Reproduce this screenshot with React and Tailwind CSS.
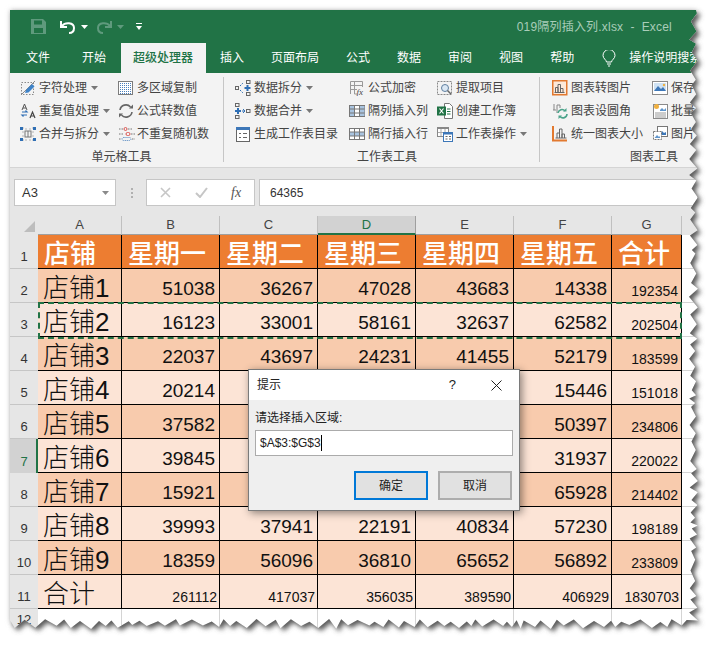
import React from 'react';

const Svg = ({ children, w = 16 }) => (
  <svg width={w} height={16} viewBox={`0 0 ${w} 16`} fill="none" className="shrink-0">
    {children}
  </svg>
);

const BLUE = '#2f6fb5';
const ORANGE = '#e2792f';

const Icons = {
  pen: (
    <Svg>
      <rect x="1.5" y="2.5" width="12" height="12" stroke="#8a8a8a" strokeDasharray="1.5 1.5" />
      <path d="M1 15 15 1" stroke="#8a8a8a" />
      <path d="M5 13l1-3 6-6 2.5 2.5-6 6z" fill="#3f83c8" />
    </Svg>
  ),
  repeat: (
    <Svg>
      <path d="M2 7l2.5-6L7 7M3 5h3" stroke="#555" />
      <path d="M10 15l2.5-6 2.5 6M11 13h3" stroke="#444" strokeWidth="1.2" />
      <path d="M2 9h5l-1.5-1.5M7 12H2l1.5 1.5" stroke={BLUE} strokeWidth="1.2" />
    </Svg>
  ),
  merge: (
    <Svg>
      <path d="M1 3h14M1 14h14M3 1v14M13 1v14" stroke="#b5b5b5" strokeDasharray="2 2" />
      <rect x="5" y="5" width="6" height="6" stroke="#777" />
      <path d="M8 5v6" stroke="#777" />
      <rect x="0" y="1" width="3" height="3" fill={BLUE} />
      <rect x="13" y="1" width="3" height="3" fill={BLUE} />
      <rect x="0" y="12" width="3" height="3" fill={BLUE} />
      <rect x="13" y="12" width="3" height="3" fill={BLUE} />
    </Svg>
  ),
  dots: (
    <Svg>
      <rect x="0.5" y="1.5" width="14" height="13" stroke="#7c7c7c" fill="#fff" />
      <path d="M2 3.5h11M2 5.5h11M2 7.5h11M2 9.5h11M2 11.5h11M2 13.5h11" stroke="#4a80bd" strokeDasharray="1 1" />
    </Svg>
  ),
  cycle: (
    <Svg>
      <path d="M2 7a6 6 0 0 1 10.5-3M14 9a6 6 0 0 1-10.5 3" stroke="#666" strokeWidth="1.6" />
      <path d="M11 5.5h4V1.5zM5 10.5H1v4z" fill="#666" />
    </Svg>
  ),
  random: (
    <Svg w={18}>
      <path d="M1 3h4M10 3h4M1 8h4M13 8h4M1 13h2M14 13h3" stroke="#777" strokeDasharray="1.5 1" />
      <rect x="6" y="1.5" width="3" height="3" rx="1.5" stroke="#d9534f" />
      <rect x="8" y="6.5" width="4" height="3" rx="1.5" stroke="#d9534f" />
      <rect x="4" y="11.5" width="9" height="3" rx="1.5" stroke="#4a80bd" strokeDasharray="1 1" />
    </Svg>
  ),
  split: (
    <Svg>
      <rect x="0.5" y="6.5" width="3" height="3" stroke="#666" />
      <rect x="11.5" y="0.5" width="3.5" height="3" stroke="#666" />
      <rect x="11.5" y="12.5" width="3.5" height="3" stroke="#666" />
      <path d="M12.5 5v6M9.5 8h6" stroke={BLUE} strokeWidth="2" />
      <path d="M5 6l3-3M5 10l3 3" stroke={BLUE} strokeDasharray="1.5 1" />
    </Svg>
  ),
  combine: (
    <Svg>
      <rect x="0.5" y="0.5" width="3.5" height="3" stroke="#666" />
      <rect x="0.5" y="12.5" width="3.5" height="3" stroke="#666" />
      <rect x="11.5" y="6.5" width="3.5" height="3" stroke="#666" />
      <path d="M3 5v6M0 8h6" stroke={BLUE} strokeWidth="2" />
      <path d="M7 8h3M8 6l2 2-2 2" stroke={BLUE} />
    </Svg>
  ),
  toc: (
    <Svg>
      <rect x="1.5" y="1.5" width="13" height="14" stroke="#666" fill="#fff" />
      <rect x="1" y="1" width="14" height="3" fill="#3d77b8" />
      <path d="M4 7.5h2M8 7.5h4M4 11.5h2M8 11.5h4" stroke="#666" />
    </Svg>
  ),
  fx: (
    <Svg>
      <path d="M1.500 14V1.500h12V7M1.500 5.500h12M1.500 9.500H8M5.500 1.500V14H8" stroke="#999" />
      <text x="7.500" y="15" fontSize="9" fontStyle="italic" fontFamily="Liberation Serif" fill="#444">fx</text>
    </Svg>
  ),
  cols: (
    <Svg>
      <rect x="0.5" y="2.5" width="15" height="11" fill="#fff" stroke="#777" />
      <rect x="1" y="3" width="4.5" height="10" fill="#a9c4e0" />
      <rect x="10.5" y="3" width="5" height="10" fill="#a9c4e0" />
      <path d="M0.500 6h15M0.500 10h15M5.500 2.500v11M10.500 2.500v11" stroke="#777" />
    </Svg>
  ),
  rows: (
    <Svg>
      <rect x="0.5" y="2.5" width="15" height="11" fill="#fff" stroke="#777" />
      <rect x="1" y="6" width="14" height="4" fill="#a9c4e0" />
      <path d="M0.500 6h15M0.500 10h15M5.500 2.500v11M10.500 2.500v11" stroke="#777" />
    </Svg>
  ),
  extract: (
    <Svg>
      <rect x="0.5" y="1.5" width="14" height="13" stroke="#888" strokeDasharray="2 1" />
      <circle cx="8" cy="8" r="3.5" fill="#dbe8f4" stroke="#5f7f9f" />
      <path d="M10.500 10.500 14 14" stroke="#666" strokeWidth="1.5" />
    </Svg>
  ),
  book: (
    <Svg>
      <path d="M7.500 0.500h5l3 3v12h-8z" fill="#fff" stroke="#777" />
      <path d="M10 6h3.500M10 8.500h3.500M10 11h3.500" stroke="#217346" />
      <rect x="0" y="3.5" width="9" height="9" fill="#217346" />
      <path d="M2.500 5.500l4 5M6.500 5.500l-4 5" stroke="#fff" strokeWidth="1.2" />
    </Svg>
  ),
  sheet: (
    <Svg>
      <rect x="0.5" y="1.5" width="11" height="9" fill="#fff" stroke="#888" />
      <rect x="1" y="1" width="11" height="2" fill="#888" />
      <path d="M4 3v7M8 3v4M1 6.500h10" stroke="#aaa" />
      <rect x="6.5" y="6.5" width="9" height="9" fill="#fff" stroke="#3d77b8" />
      <rect x="6" y="6" width="10" height="2.5" fill="#3d77b8" />
      <path d="M8.500 10.500h2M12 10.500h2M8.500 13h2M12 13h2" stroke="#666" />
    </Svg>
  ),
  chartPic: (
    <Svg>
      <rect x="0.75" y="0.75" width="14" height="14" fill="#fde9d9" stroke={ORANGE} strokeWidth="1.5" />
      <path d="M3.500 12.500v-5h2.500v5M6 12.500v-8h2.500v8M8.500 12.500v-4h2.500v4M2.500 12.500h10" stroke="#666" />
    </Svg>
  ),
  chartRound: (
    <Svg>
      <path d="M2 1v6M1 7h3M5 10V2h3v3" stroke="#888" />
      <path d="M6 10a4 4 0 0 1 7-2M15 11a4 4 0 0 1-7 2.500" stroke="#4aa38a" strokeWidth="1.6" />
      <path d="M11 8.500h3.500V5zM10 12.500H6.500V16z" fill="#4aa38a" />
    </Svg>
  ),
  chartSize: (
    <Svg>
      <rect x="0" y="0" width="2" height="14" fill={ORANGE} />
      <rect x="0" y="13.5" width="15" height="2" fill={ORANGE} />
      <path d="M5 12V7h2.500v5M7.500 12V3H10v9M10 12V8h2.500v4M3.500 12h11" stroke="#666" />
    </Svg>
  ),
  picture: (
    <Svg>
      <rect x="0.5" y="1.5" width="15" height="13" fill="#fff" stroke="#8a8a8a" />
      <rect x="2" y="3" width="12" height="8" fill="#cfe2f3" />
      <path d="M2 11l4-5 3 3 2-2 3 4z" fill="#3d77b8" />
      <circle cx="12" cy="5" r="1.2" fill="#f0b040" />
    </Svg>
  ),
  batch: (
    <Svg>
      <rect x="1.5" y="1.5" width="14" height="14" fill="#fff" stroke="#8a8a8a" />
      <circle cx="4.5" cy="3.5" r="2.5" fill="#f0b040" />
      <path d="M8 7l2-2 2 2 2-2v3H8z" fill="#5f95cc" />
      <path d="M3 10h11M3 12h11M3 14h11" stroke="#999" />
    </Svg>
  ),
  pics: (
    <Svg>
      <rect x="5.5" y="0.5" width="10" height="10" fill="#fff" stroke="#777" />
      <path d="M7 9l3-4 2 2 2-1v3z" fill="#3d77b8" />
      <rect x="1.5" y="5.5" width="8" height="8" fill="#fff" stroke="#777" strokeDasharray="2 1" />
      <path d="M2.500 12l2.500-3 2 2 1-1v2z" fill="#5f95cc" />
    </Svg>
  ),
};

const Caret = ({ color = '#777', className = 'ml-[5px]' }) => (
  <svg width="7" height="4" viewBox="0 0 7 4" className={`shrink-0 ${className}`}>
    <path d="M0 0h7L3.500 4z" fill={color} />
  </svg>
);

const Item = ({ icon, label, caret }) => (
  <div className="flex items-center h-[23px] gap-[3px] text-[12px] leading-[16px] text-[#444] whitespace-nowrap">
    <span className="w-4 h-4 flex shrink-0">{icon}</span>
    <span>{label}</span>
    {caret && <Caret className="ml-[1px]" />}
  </div>
);

const Group = ({ label, className, children }) => (
  <div className={`flex flex-col shrink-0 ${className}`}>
    <div className="flex h-[71px]">{children}</div>
    <div className="h-[19px] flex items-center justify-center text-[12px] text-[#444]">{label}</div>
  </div>
);

const Ribbon = () => (
  <div className="flex h-[95px] pt-[3px] bg-[#f3f3f3] border-b border-[#d4d4d4] overflow-hidden">
    <Group label="单元格工具" className="w-[213px] pl-[10px]">
      <div className="w-[98px]">
        <Item icon={Icons.pen} label="字符处理" caret />
        <Item icon={Icons.repeat} label="重复值处理" caret />
        <Item icon={Icons.merge} label="合并与拆分" caret />
      </div>
      <div>
        <Item icon={Icons.dots} label="多区域复制" />
        <Item icon={Icons.cycle} label="公式转数值" />
        <Item icon={Icons.random} label="不重复随机数" />
      </div>
    </Group>
    <div className="w-px h-[85px] mt-[1px] bg-[#c6c6c6] shrink-0" />
    <Group label="工作表工具" className="w-[315px] pl-[11px]">
      <div className="w-[114px]">
        <Item icon={Icons.split} label="数据拆分" caret />
        <Item icon={Icons.combine} label="数据合并" caret />
        <Item icon={Icons.toc} label="生成工作表目录" />
      </div>
      <div className="w-[88px]">
        <Item icon={Icons.fx} label="公式加密" />
        <Item icon={Icons.cols} label="隔列插入列" />
        <Item icon={Icons.rows} label="隔行插入行" />
      </div>
      <div>
        <Item icon={Icons.extract} label="提取项目" />
        <Item icon={Icons.book} label="创建工作簿" />
        <Item icon={Icons.sheet} label="工作表操作" caret />
      </div>
    </Group>
    <div className="w-px h-[85px] mt-[1px] bg-[#c6c6c6] shrink-0" />
    <Group label="图表工具" className="w-[216px] pl-[12px]">
      <div className="w-[100px]">
        <Item icon={Icons.chartPic} label="图表转图片" />
        <Item icon={Icons.chartRound} label="图表设圆角" />
        <Item icon={Icons.chartSize} label="统一图表大小" />
      </div>
      <div>
        <Item icon={Icons.picture} label="保存" />
        <Item icon={Icons.batch} label="批量" />
        <Item icon={Icons.pics} label="图片" />
      </div>
    </Group>
  </div>
);

const TitleBar = () => (
  <div className="flex items-center h-[33px] bg-[#217346]">
    <svg width="15" height="15" viewBox="0 0 15 15" className="ml-[21px] shrink-0">
      <path d="M0 0h12l3 3v12H0z" fill="#5f9a7d" />
      <rect x="3" y="1.5" width="8" height="4" fill="#217346" />
      <rect x="3" y="9" width="9" height="5" fill="#217346" />
    </svg>
    <svg width="16" height="14" viewBox="0 0 16 14" fill="none" className="ml-[14px] shrink-0">
      <path d="M2 6c3-4 12-4 12 2 0 3-2 5-5 5" stroke="#fff" strokeWidth="2" />
      <path d="M1 1v6h6" stroke="#fff" strokeWidth="2" />
    </svg>
    <Caret color="#fff" />
    <svg width="16" height="14" viewBox="0 0 16 14" fill="none" className="ml-[8px] shrink-0">
      <path d="M14 6C11 2 2 2 2 8c0 3 2 5 5 5" stroke="#5f9a7d" strokeWidth="2" />
      <path d="M15 1v6H9" stroke="#5f9a7d" strokeWidth="2" />
    </svg>
    <Caret color="#5f9a7d" />
    <svg width="6" height="7" viewBox="0 0 6 7" className="ml-[12px] shrink-0">
      <path d="M0 0h6v1H0zM0 3h6L3 7z" fill="#fff" />
    </svg>
    <div className="ml-auto mr-[30px] text-[12px] tracking-[0.2px] text-[#a9cdb9] whitespace-pre">019隔列插入列.xlsx  -  Excel</div>
  </div>
);

const Tabs = () => (
  <div className="flex h-[30px] bg-[#217346] text-[12px] text-white whitespace-nowrap">
    <div className="ml-[16px] flex items-center">文件</div>
    <div className="ml-[32px] flex items-center">开始</div>
    <div className="ml-[15px] px-3 flex items-center bg-[#f3f3f3] text-[#217346] font-medium w-[85px]">超级处理器</div>
    <div className="ml-[14px] flex items-center gap-[27px]">
      <span>插入</span>
      <span>页面布局</span>
      <span>公式</span>
      <span>数据</span>
      <span>审阅</span>
      <span>视图</span>
      <span>帮助</span>
    </div>
    <div className="ml-[28px] flex items-center">
      <svg width="14" height="17" viewBox="0 0 14 17" fill="none" className="shrink-0">
        <path d="M4.500 12c0-2-3.500-3.500-3.500-6.500a6 6 0 0 1 12 0c0 3-3.500 4.500-3.500 6.500zM5 14h4M6 16h2" stroke="#fff" />
      </svg>
      <span className="ml-[13px]">操作说明搜索</span>
    </div>
  </div>
);

const FormulaBar = () => (
  <div className="flex items-center h-[48px] pt-[1px] px-1 gap-[4px] bg-[#e6e6e6]">
    <div className="w-[102px] h-[27px] flex items-center justify-between pl-[7px] pr-[6px] bg-white border border-[#c6c6c6] text-[13px] text-[#333]">
      <span>A3</span>
      <Caret color="#8a8a8a" />
    </div>
    <div className="w-[4px] ml-[10px] mr-[8px] flex flex-col gap-[2px] items-center">
      <span className="w-[2px] h-[2px] bg-[#b0b0b0]" />
      <span className="w-[2px] h-[2px] bg-[#b0b0b0]" />
      <span className="w-[2px] h-[2px] bg-[#b0b0b0]" />
    </div>
    <div className="w-[109px] h-[27px] flex items-center bg-white border border-[#c6c6c6]">
      <svg width="11" height="11" viewBox="0 0 11 11" fill="none" className="ml-[13px] shrink-0">
        <path d="M1 1l9 9M10 1l-9 9" stroke="#c6c6c6" strokeWidth="1.6" />
      </svg>
      <svg width="13" height="11" viewBox="0 0 13 11" fill="none" className="ml-[24px] shrink-0">
        <path d="M1 6l4 4 7-9" stroke="#c6c6c6" strokeWidth="2" />
      </svg>
      <span className="ml-[23px] font-['Liberation_Serif',serif] italic text-[14px] leading-none text-[#555]">fx</span>
    </div>
    <div className="flex-1 h-[27px] flex items-center pl-[10px] bg-white border border-[#c6c6c6] text-[12px] text-[#333]">64365</div>
  </div>
);

const COLUMNS = ['A', 'B', 'C', 'D', 'E', 'F', 'G'];

const rows = [
  ['店铺', '星期一', '星期二', '星期三', '星期四', '星期五', '合计'],
  ['店铺1', '51038', '36267', '47028', '43683', '14338', '192354'],
  ['店铺2', '16123', '33001', '58161', '32637', '62582', '202504'],
  ['店铺3', '22037', '43697', '24231', '41455', '52179', '183599'],
  ['店铺4', '20214', '', '', '', '15446', '151018'],
  ['店铺5', '37582', '', '', '', '50397', '234806'],
  ['店铺6', '39845', '', '', '', '31937', '220022'],
  ['店铺7', '15921', '', '', '', '65928', '214402'],
  ['店铺8', '39993', '37941', '22191', '40834', '57230', '198189'],
  ['店铺9', '18359', '56096', '36810', '65652', '56892', '233809'],
  ['合计', '261112', '417037', '356035', '389590', '406929', '1830703'],
];

const rowBg = (i) => {
  if (i === 0) return 'bg-[#ed7d31]';
  return i % 2 === 1 ? 'bg-[#f8cbad]' : 'bg-[#fce4d6]';
};

const Cell = ({ value, row, col }) => {
  let text = 'justify-end pr-[4px] text-[19px] leading-[26px]';
  if (row === 0) text = 'pl-[6px] text-[26px] leading-[28px] font-medium text-white';
  else if (col === 0) text = 'pl-[5px] text-[26px] leading-[28px] font-light';
  else if (row === 10) text = 'justify-end pr-[2px] text-[14px] leading-[22px]';
  else if (col === 6) text = 'justify-end pr-[3px] text-[14px] leading-[22px]';
  return (
    <div className={`h-[34px] flex items-end border-r border-b border-black text-[#111] whitespace-nowrap ${rowBg(row)} ${text}`}>
      {value}
    </div>
  );
};

const Sheet = () => (
  <div className="relative bg-white">
    <div className="grid grid-cols-[28px_84px_repeat(5,98px)_70px_1fr]">
      <div className="h-[19px] bg-[#e6e6e6] flex items-end justify-end pr-[3px] pb-[3px]">
        <svg width="11" height="11" viewBox="0 0 11 11"><path d="M11 0v11H0z" fill="#bdbdbd" /></svg>
      </div>
      {COLUMNS.map((c) =>
        c === 'D' ? (
          <div key={c} className="h-[19px] flex items-center justify-center text-[13px] bg-[#d2d2d2] text-[#217346] border-r border-[#9f9f9f] border-b-2 border-b-[#217346]">{c}</div>
        ) : (
          <div key={c} className="h-[19px] flex items-center justify-center text-[13px] bg-[#e6e6e6] text-[#444] border-r border-[#c0c0c0] border-b border-b-[#9f9f9f]">{c}</div>
        )
      )}
      <div className="h-[19px] bg-[#e6e6e6]" />
      {rows.map((row, r) => (
        <React.Fragment key={r}>
          {r === 6 ? (
            <div className="h-[34px] flex items-end justify-center pb-[2px] pl-[2px] text-[13px] bg-[#d2d2d2] text-[#217346] border-r-2 border-[#217346]">{r + 1}</div>
          ) : (
            <div className="h-[34px] flex items-end justify-center pb-[2px] text-[13px] bg-[#e6e6e6] text-[#333] border-b border-[#c6c6c6]">{r + 1}</div>
          )}
          {row.map((v, c) => (
            <Cell key={c} value={v} row={r} col={c} />
          ))}
          <div className="h-[34px] bg-white border-b border-[#d4d4d4]" />
        </React.Fragment>
      ))}
      <div className="h-[34px] flex items-start justify-center pt-[1px] text-[13px] bg-[#e6e6e6] text-[#333]">12</div>
      {COLUMNS.map((c) => (
        <div key={c} className="h-[34px] bg-white border-r border-[#d4d4d4]" />
      ))}
    </div>
    <div className="absolute left-[28px] top-[86px] w-[644px] h-[37px] border-2 border-dashed border-[#217346]" />
  </div>
);

const Dialog = () => (
  <div className="absolute left-[248px] top-[369px] w-[272px] h-[142px] flex flex-col border border-[#7a7a7a] bg-[#efefef] text-[#222] shadow-[2px_2px_8px_rgba(0,0,0,0.45)]">
    <div className="flex items-center h-[30px] bg-white text-[12px] pl-[8px]">
      <span>提示</span>
      <span className="ml-auto text-[13px] mr-[35px]">?</span>
      <svg width="11" height="11" viewBox="0 0 11 11" fill="none" className="mr-[17px] shrink-0">
        <path d="M0.500 0.500l10 10M10.500 0.500l-10 10" stroke="#222" />
      </svg>
    </div>
    <div className="px-[6px] pt-[9px] text-[12px] leading-[18px]">请选择插入区域:</div>
    <div className="mx-[6px] mt-[3px] h-[26px] flex items-center pl-[4px] bg-white border border-[#ababab] text-[12px]">
      <span>$A$3:$G$3</span>
      <span className="w-px h-[16px] bg-black" />
    </div>
    <div className="flex justify-end gap-[10px] pr-[7px] pt-[15px]">
      <button className="w-[74px] h-[29px] text-[12px] bg-[#e1e1e1] border-2 border-[#0078d7]">确定</button>
      <button className="w-[74px] h-[29px] text-[12px] bg-[#e1e1e1] border-2 border-[#adadad]">取消</button>
    </div>
  </div>
);

// torn paper edge, same points on every render
const buildEdge = () => {
  let seed = 4711;
  const rand = () => {
    seed = (seed * 16807) % 2147483647;
    return seed / 2147483647;
  };
  let d = 'M10 10L696 10';
  let y = 10;
  let out = true;
  while (y < 620) {
    y += 3 + rand() * 8;
    d += `L${(out ? 695 + rand() * 3 : 689 + rand() * 3).toFixed(1)} ${y.toFixed(1)}`;
    out = !out;
  }
  let x = 690;
  while (x > 14) {
    x -= 3 + rand() * 9;
    d += `L${x.toFixed(1)} ${(out ? 625 + rand() * 4 : 619 + rand() * 3).toFixed(1)}`;
    out = !out;
  }
  return d + 'L10 628Z';
};

const edge = buildEdge();

const TornEdge = () => (
  <svg width="716" height="648" viewBox="0 0 716 648" className="absolute inset-0 pointer-events-none">
    <defs>
      <clipPath id="outside">
        <path clipRule="evenodd" d={`M0 0H716V648H0Z${edge}`} />
      </clipPath>
      <filter id="soft" x="-5%" y="-5%" width="110%" height="110%">
        <feGaussianBlur stdDeviation="2.5" />
      </filter>
    </defs>
    <g clipPath="url(#outside)">
      <rect width="716" height="648" fill="#fff" />
      <path d={edge} fill="#c4c4c4" filter="url(#soft)" />
      <path d={edge} fill="#5a5a5a" filter="url(#soft)" transform="translate(3 3)" />
    </g>
  </svg>
);

export default function App() {
  return (
    <div className="relative w-[716px] h-[648px] overflow-hidden bg-white font-['Liberation_Sans','Noto_Sans_CJK_SC',sans-serif]">
      <div className="w-[692px] h-[638px] ml-[10px] pt-[10px] overflow-hidden">
        <TitleBar />
        <Tabs />
        <Ribbon />
        <FormulaBar />
        <Sheet />
      </div>
      <Dialog />
      <TornEdge />
    </div>
  );
}
